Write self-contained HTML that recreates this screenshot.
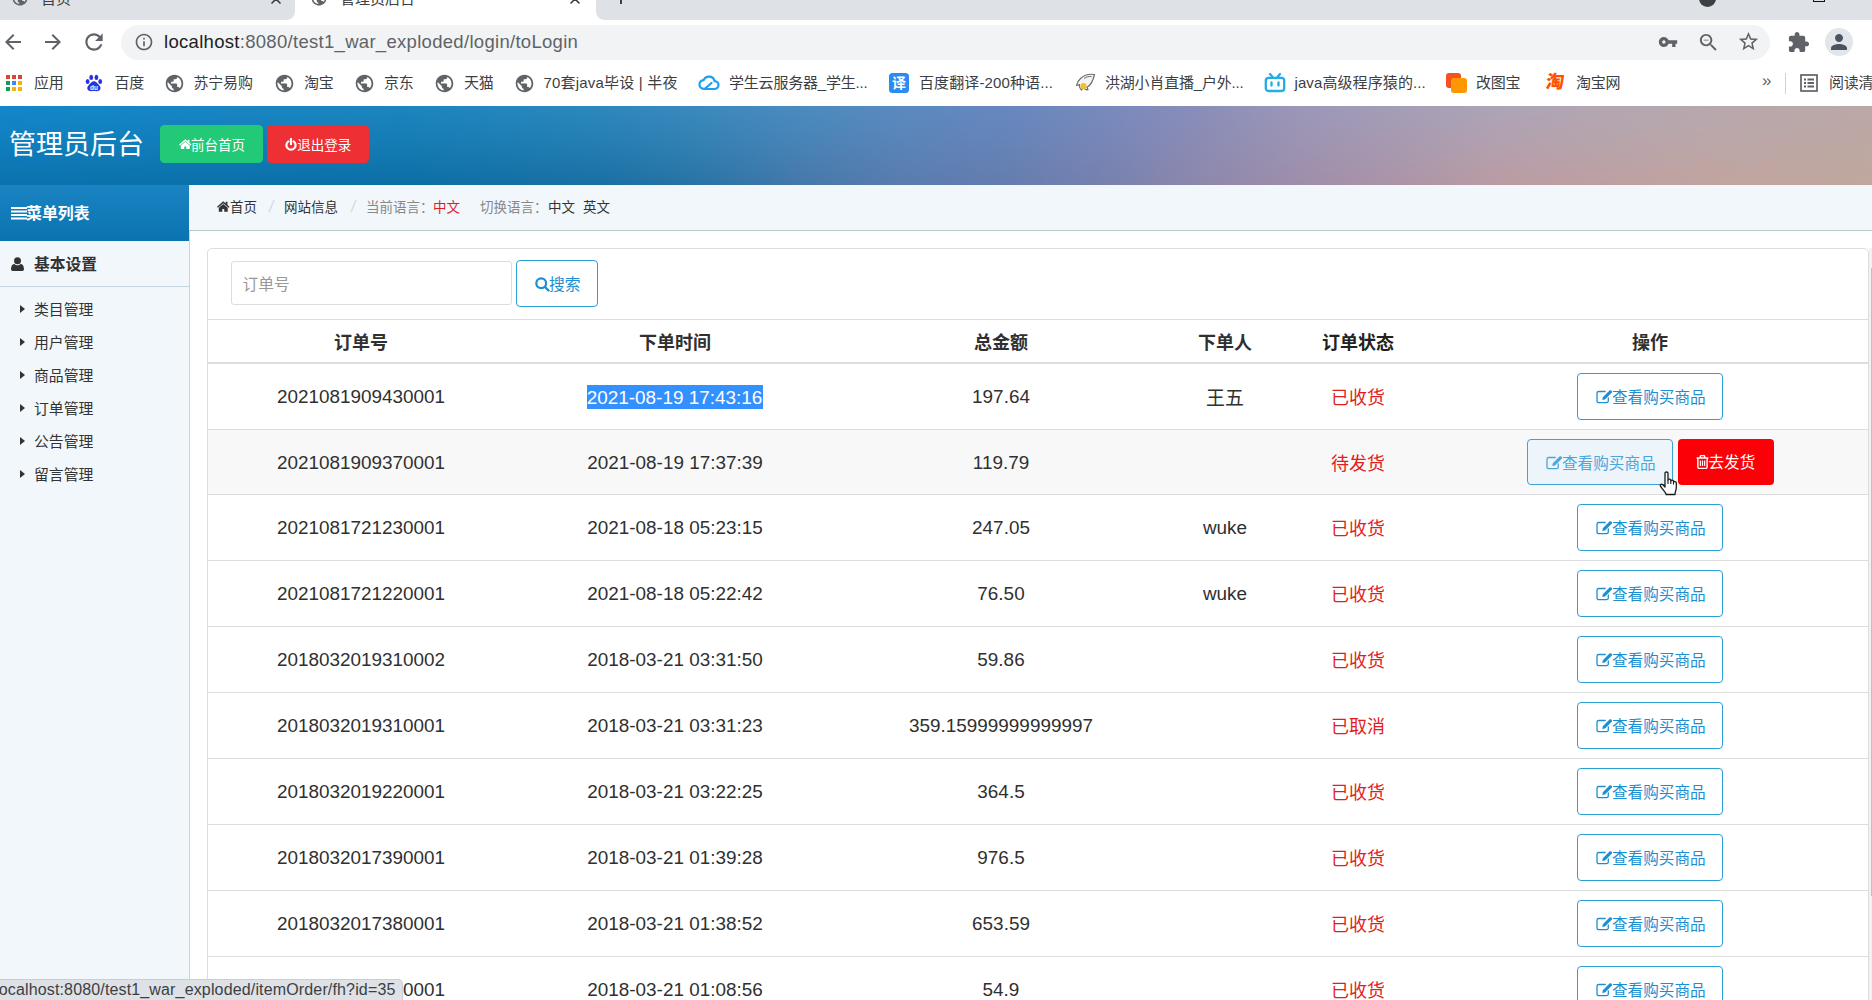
<!DOCTYPE html>
<html lang="zh-CN">
<head>
<meta charset="utf-8">
<title>管理员后台</title>
<style>
*{box-sizing:border-box;margin:0;padding:0}
html,body{width:1872px;height:1000px;overflow:hidden;background:#fff}
body{position:relative;font-family:"Liberation Sans","Noto Sans CJK SC",sans-serif;color:#222;-webkit-font-smoothing:antialiased}
.abs{position:absolute}
svg{display:block}
/* ---------- browser chrome ---------- */
#tabstrip{left:0;top:0;width:1872px;height:20px;background:#dee1e6}
#tab-active{left:295px;top:-12px;width:301px;height:32px;background:#fff;border-radius:8px 8px 0 0}
#tab-active:before,#tab-active:after{content:"";position:absolute;bottom:0;width:8px;height:8px;background:radial-gradient(circle at 0 0,rgba(255,255,255,0) 7.5px,#fff 8px)}
#tab-active:before{left:-8px}
#tab-active:after{right:-8px;transform:scaleX(-1)}
.tabtxt{top:-11px;font-size:15px;line-height:20px;color:#3c4043;white-space:nowrap}
#toolbar{left:0;top:20px;width:1872px;height:44px;background:#fff}
#omni{left:121px;top:25px;width:1649px;height:35px;border-radius:18px;background:#f1f3f4}
#url{left:164px;top:30px;font-size:18.5px;line-height:24px;color:#5f6368;white-space:nowrap;letter-spacing:.3px}
#url b{font-weight:normal;color:#202124}
#bookmarks{left:0;top:64px;width:1872px;height:41px;background:#fff}
.bm{top:72px;font-size:15px;line-height:22px;color:#3c4043;white-space:nowrap;letter-spacing:-.2px}
.ico{position:absolute}
/* ---------- page ---------- */
#header{left:0;top:105.6px;width:1872px;height:79px;background:linear-gradient(to right,#0a73ae 0px,#0c6fa6 400px,#1a70a3 600px,#2a74a6 700px,#4678aa 800px,#5a7cae 900px,#657dae 1000px,#7681ae 1100px,#8e88ac 1200px,#9f8eaa 1300px,#bb9ca4 1500px,#c2a4a0 1700px,#c0a89e 1872px)}
#header:before{content:"";position:absolute;left:0;top:0;right:0;bottom:0;background:linear-gradient(to right,#1487ca 0px,#1c85be 400px,#2d88bd 600px,#4a8bbf 800px,#5a8abf 900px,#6588bf 1000px,#7789bd 1100px,#898eb9 1200px,#9b97b8 1300px,#ada4b6 1500px,#b6a8ae 1700px,#baa8a6 1872px);-webkit-mask-image:linear-gradient(to bottom,#000 0%,rgba(0,0,0,.55) 50%,transparent 100%);mask-image:linear-gradient(to bottom,#000 0%,rgba(0,0,0,.55) 50%,transparent 100%)}
#title{left:9px;top:126px;font-size:27px;line-height:38px;color:#fff;white-space:nowrap}
.hbtn{top:125px;height:38px;border-radius:4.5px;color:#fff;font-size:13.5px;line-height:38px;white-space:nowrap}
.hbtn span{position:absolute;top:2px}
#btn-home{left:160px;width:103px;background:#22c977}
#btn-home span{left:31px}
#btn-out{left:267.3px;width:101.5px;background:#ee2f33}
#btn-out span{left:30px}
#side{left:0;top:185px;width:190px;height:815px;background:#f2f7fb;border-right:1px solid #c5d5e0}
#side-head{left:0;top:184.5px;width:189px;height:56px;background:linear-gradient(to bottom,#1a84c3,#0a73b0)}
#side-head span{position:absolute;left:26px;top:17.5px;font-size:15.9px;line-height:24px;font-weight:bold;color:#fff;white-space:nowrap}
#side-sub{left:0;top:241px;width:189px;height:46px;border-bottom:1px solid #c5d5e0}
#side-sub span{position:absolute;left:34px;top:12px;font-size:15.75px;line-height:24px;font-weight:bold;color:#333;white-space:nowrap}
.mi{left:34px;font-size:14.85px;line-height:22px;color:#333;white-space:nowrap}
.mi:before{content:"";position:absolute;left:-14px;top:6.500px;border-left:5px solid #333;border-top:4.500px solid transparent;border-bottom:4.500px solid transparent}
#crumb{left:189px;top:184.5px;width:1683px;height:46.5px;background:#f2f7fb;border-bottom:1px solid #b9cacd}
.ct{top:198px;font-size:13.5px;line-height:20px;color:#333;white-space:nowrap}
.gray{color:#888}.red{color:#e01e1e}.sep{color:#d6dade;font-size:17px;margin-top:-1px;transform:skewX(-8deg)}
#panel{left:207px;top:248px;width:1662px;height:800px;border:1px solid #ddd;border-radius:5px;background:#fff}
#inp{left:231px;top:261px;width:281px;height:44px;border:1px solid #ddd;border-radius:3px;background:#fff}
#inp span{position:absolute;left:10.5px;top:12px;font-size:15.75px;line-height:22px;color:#999;white-space:nowrap}
#sbtn{left:516px;top:260px;width:82px;height:47px;border:1px solid #2c9fd6;border-radius:4px;background:#fff;color:#1d8fd1;font-size:15.75px;line-height:45px;white-space:nowrap}
#sbtn span{position:absolute;left:32px;top:.5px}
/* table */
#tbl{left:208px;top:319px;width:1660px}
.row{position:absolute;left:0;width:1660px;border-top:1px solid #ddd}
.row.alt{background:#f8f8f8}
.c{position:absolute;top:0;height:100%;text-align:center;font-size:18.9px;white-space:nowrap;letter-spacing:0;color:#303030}
.row .c{line-height:65px}
.c1{left:0;width:306px}.c2{left:306px;width:322px}.c3{left:628px;width:330px}.c4{left:958px;width:118px}.c5{left:1076px;width:148px}.c6{left:1224px;width:436px}
.c5{color:#e01e1e;font-size:18px}.row .c5,.row .cj{padding-top:1.5px}
#thead{position:absolute;left:0;top:0;width:1660px;height:45px;border-top:1px solid #ddd;border-bottom:2px solid #ddd}
#thead .c{font-weight:bold;line-height:46px;letter-spacing:0;font-size:18px}
.vb{position:absolute;top:9px;left:145px;width:146px;height:47px;border:1px solid #2c9fd6;border-radius:4px;background:#fff;color:#1d8fd1;font-size:15.6px;line-height:45px;letter-spacing:0;text-align:left}
.vb span{position:absolute;left:34px;top:1px}
.vb .ei{position:absolute;left:17.500px;top:15px}
.vb.hov{background:#edf5fa;color:#4ba6dc;border-color:#3aa4d8;height:46px}
.sb{position:absolute;top:9px;left:246px;width:96px;height:45.5px;border-radius:4px;background:#fb0007;color:#fff;font-size:15.6px;line-height:46px;letter-spacing:0;text-align:left}
.sb span{position:absolute;left:30.500px;top:.5px}
.sb .ti{position:absolute;left:17.5px;top:16px}
.sel{background:#3390ff;color:#fff;padding:1.5px 1px 2px 0}
#status{left:0;top:979px;width:403px;height:21px;background:#dee1e6;border-top:1px solid #cdcdcd;border-right:1px solid #cdcdcd;border-radius:0 5px 0 0}
#status span{position:absolute;left:-5px;top:0;font-size:16px;line-height:20px;color:#3c4043;white-space:nowrap;letter-spacing:.15px}
</style>
</head>
<body>
<!-- CHROME -->
<div class="abs" id="tabstrip"></div>
<div class="abs" id="tab-active"></div>
<div class="abs tabtxt" style="left:41px">首页</div>
<div class="abs tabtxt" style="left:340px">管理员后台</div>
<div class="abs" id="toolbar"></div>
<div class="abs" id="omni"></div>
<div class="abs" id="url"><b>localhost</b>:8080/test1_war_exploded/login/toLogin</div>
<div class="abs" id="bookmarks"></div>
<svg class="ico" style="left:1px;top:30px" width="24" height="24" viewBox="0 0 24 24"><path fill="#5f6368" d="M20 11H7.83l5.59-5.59L12 4l-8 8 8 8 1.41-1.41L7.83 13H20v-2z"/></svg>
<svg class="ico" style="left:41px;top:30px" width="24" height="24" viewBox="0 0 24 24"><path fill="#5f6368" d="M12 4l-1.41 1.41L16.17 11H4v2h12.17l-5.58 5.59L12 20l8-8z"/></svg>
<svg class="ico" style="left:81px;top:29px" width="26" height="26" viewBox="0 0 24 24"><path fill="#5f6368" d="M17.65 6.35C16.2 4.9 14.21 4 12 4c-4.42 0-7.99 3.58-7.99 8s3.57 8 7.99 8c3.73 0 6.84-2.55 7.73-6h-2.08c-.82 2.33-3.04 4-5.65 4-3.31 0-6-2.69-6-6s2.69-6 6-6c1.66 0 3.14.69 4.22 1.78L13 11h7V4l-2.35 2.35z"/></svg>
<svg class="ico" style="left:134px;top:32px" width="20" height="20" viewBox="0 0 24 24"><path fill="#5f6368" d="M11 7h2v2h-2zm0 4h2v6h-2zm1-9C6.48 2 2 6.480 2 12s4.480 10 10 10 10-4.480 10-10S17.520 2 12 2zm0 18c-4.410 0-8-3.590-8-8s3.590-8 8-8 8 3.590 8 8-3.590 8-8 8z"/></svg>
<svg class="ico" style="left:1658px;top:32px" width="20" height="20" viewBox="0 0 24 24"><path fill="#5f6368" d="M12.65 10C11.830 7.670 9.610 6 7 6c-3.310 0-6 2.690-6 6s2.690 6 6 6c2.610 0 4.830-1.670 5.650-4H17v4h4v-4h2v-4H12.650zM7 14c-1.100 0-2-.9-2-2s.9-2 2-2 2 .9 2 2-.9 2-2 2z"/></svg>
<svg class="ico" style="left:1697px;top:31px" width="23" height="23" viewBox="0 0 24 24"><path fill="#5f6368" d="M15.500 14h-.79l-.28-.27C15.410 12.590 16 11.110 16 9.500 16 5.910 13.090 3 9.500 3S3 5.910 3 9.500 5.910 16 9.500 16c1.610 0 3.090-.59 4.230-1.570l.27.28v.79l5 4.990L20.490 19l-4.990-5zm-6 0C7.010 14 5 11.990 5 9.500S7.010 5 9.500 5 14 7.010 14 9.500 11.990 14 9.500 14zM7 9h5v1H7z"/></svg>
<svg class="ico" style="left:1737px;top:30px" width="23" height="23" viewBox="0 0 24 24"><path fill="#5f6368" d="M22 9.240l-7.190-.62L12 2 9.190 8.630 2 9.240l5.460 4.730L5.820 21 12 17.270 18.180 21l-1.630-7.030L22 9.240zM12 15.400l-3.760 2.270 1-4.280-3.320-2.880 4.380-.38L12 6.100l1.710 4.040 4.380.38-3.320 2.880 1 4.280L12 15.400z"/></svg>
<svg class="ico" style="left:1787px;top:31px" width="23" height="23" viewBox="0 0 24 24"><path fill="#5f6368" d="M20.500 11H19V7c0-1.100-.9-2-2-2h-4V3.500C13 2.120 11.880 1 10.500 1S8 2.120 8 3.500V5H4c-1.100 0-1.990.9-1.990 2v3.800H3.500c1.490 0 2.700 1.210 2.700 2.700s-1.210 2.700-2.700 2.700H2V20c0 1.100.9 2 2 2h3.800v-1.500c0-1.490 1.210-2.700 2.700-2.700 1.490 0 2.700 1.210 2.700 2.700V22H17c1.100 0 2-.9 2-2v-4h1.500c1.380 0 2.500-1.120 2.500-2.500S21.880 11 20.500 11z"/></svg>
<div class="abs" style="left:1825px;top:28px;width:28px;height:28px;border-radius:50%;background:#e2e5ea"></div>
<svg class="ico" style="left:1827px;top:30px" width="24" height="24" viewBox="0 0 24 24"><path fill="#4a5361" d="M12 12c2.210 0 4-1.790 4-4s-1.790-4-4-4-4 1.790-4 4 1.790 4 4 4zm0 2c-2.670 0-8 1.340-8 4v2h16v-2c0-2.660-5.330-4-8-4z"/></svg>
<!-- tabstrip bits -->
<svg class="ico" style="left:11px;top:-11px" width="18" height="18" viewBox="0 0 24 24"><path fill="#5f6368" d="M12 2C6.480 2 2 6.480 2 12s4.480 10 10 10 10-4.480 10-10S17.520 2 12 2zm-1 17.930c-3.950-.49-7-3.850-7-7.930 0-.62.080-1.210.21-1.790L9 15v1c0 1.100.9 2 2 2v1.930zm6.900-2.540c-.26-.81-1-1.390-1.900-1.390h-1v-3c0-.55-.45-1-1-1H8v-2h2c.55 0 1-.45 1-1V7h2c1.100 0 2-.9 2-2v-.41c2.930 1.190 5 4.060 5 7.410 0 2.080-.8 3.970-2.100 5.390z"/></svg>
<svg class="ico" style="left:310px;top:-11px" width="18" height="18" viewBox="0 0 24 24"><path fill="#5f6368" d="M12 2C6.480 2 2 6.480 2 12s4.480 10 10 10 10-4.480 10-10S17.520 2 12 2zm-1 17.930c-3.950-.49-7-3.850-7-7.930 0-.62.080-1.210.21-1.790L9 15v1c0 1.100.9 2 2 2v1.930zm6.900-2.540c-.26-.81-1-1.390-1.900-1.390h-1v-3c0-.55-.45-1-1-1H8v-2h2c.55 0 1-.45 1-1V7h2c1.100 0 2-.9 2-2v-.41c2.930 1.190 5 4.060 5 7.410 0 2.080-.8 3.970-2.100 5.390z"/></svg>
<svg class="ico" style="left:270px;top:-7px" width="12" height="12" viewBox="0 0 12 12"><path stroke="#3c4043" stroke-width="1.6" fill="none" d="M1.500 1.500l9 9M10.500 1.500l-9 9"/></svg>
<svg class="ico" style="left:569px;top:-7px" width="12" height="12" viewBox="0 0 12 12"><path stroke="#3c4043" stroke-width="1.6" fill="none" d="M1.500 1.500l9 9M10.500 1.500l-9 9"/></svg>
<div class="abs" style="left:620px;top:-6px;width:2px;height:10px;background:#3c4043"></div>
<div class="abs" style="left:1699px;top:-10px;width:17px;height:17px;border-radius:50%;background:#3c4043"></div>
<div class="abs" style="left:1813px;top:-9px;width:12px;height:11px;border:1.500px solid #111"></div>

<!--BM-START-->
<svg class="ico" style="left:6px;top:74.5px" width="16" height="16" viewBox="0 0 16 16"><rect x="0" y="0" width="4" height="4" fill="#db4437"/><rect x="6" y="0" width="4" height="4" fill="#db4437"/><rect x="12" y="0" width="4" height="4" fill="#db4437"/><rect x="0" y="6" width="4" height="4" fill="#0f9d58"/><rect x="6" y="6" width="4" height="4" fill="#4285f4"/><rect x="12" y="6" width="4" height="4" fill="#f4b400"/><rect x="0" y="12" width="4" height="4" fill="#0f9d58"/><rect x="6" y="12" width="4" height="4" fill="#f4b400"/><rect x="12" y="12" width="4" height="4" fill="#f4b400"/></svg>
<div class="abs bm" style="left:34px;">应用</div>
<svg class="ico" style="left:85px;top:74px" width="18" height="18" viewBox="0 0 18 18"><g fill="#2932e1"><ellipse cx="2.600" cy="7.600" rx="1.900" ry="2.500"/><ellipse cx="6.200" cy="3.400" rx="1.900" ry="2.600"/><ellipse cx="11.400" cy="3.400" rx="1.900" ry="2.600"/><ellipse cx="15.200" cy="7.600" rx="1.900" ry="2.500"/><path d="M8.900 7.200c2.200 0 3.300 2 4.800 3.600 1.600 1.700 2.300 3 1.500 4.800-.9 1.900-3 1.700-6.300 1.500-3.300.2-5.400.4-6.300-1.500-.8-1.800-.1-3.100 1.500-4.800C5.600 9.200 6.700 7.200 8.900 7.200z"/></g><text x="8.900" y="15.600" font-size="6.500" font-weight="bold" text-anchor="middle" fill="#fff" font-family="Liberation Sans,sans-serif">du</text></svg>
<div class="abs bm" style="left:114.5px;">百度</div>
<svg class="ico" style="left:163.5px;top:72.5px" width="21" height="21" viewBox="0 0 24 24"><path fill="#5f6368" d="M12 2C6.480 2 2 6.480 2 12s4.480 10 10 10 10-4.480 10-10S17.520 2 12 2zm-1 17.930c-3.950-.49-7-3.850-7-7.930 0-.62.080-1.210.21-1.790L9 15v1c0 1.100.9 2 2 2v1.930zm6.900-2.540c-.26-.81-1-1.390-1.900-1.390h-1v-3c0-.55-.45-1-1-1H8v-2h2c.55 0 1-.45 1-1V7h2c1.100 0 2-.9 2-2v-.41c2.930 1.190 5 4.060 5 7.410 0 2.080-.8 3.970-2.100 5.390z"/></svg>
<div class="abs bm" style="left:193.5px;">苏宁易购</div>
<svg class="ico" style="left:273.5px;top:72.5px" width="21" height="21" viewBox="0 0 24 24"><path fill="#5f6368" d="M12 2C6.480 2 2 6.480 2 12s4.480 10 10 10 10-4.480 10-10S17.520 2 12 2zm-1 17.930c-3.950-.49-7-3.850-7-7.930 0-.62.080-1.210.21-1.790L9 15v1c0 1.100.9 2 2 2v1.930zm6.900-2.540c-.26-.81-1-1.390-1.900-1.390h-1v-3c0-.55-.45-1-1-1H8v-2h2c.55 0 1-.45 1-1V7h2c1.100 0 2-.9 2-2v-.41c2.930 1.190 5 4.060 5 7.410 0 2.080-.8 3.970-2.100 5.390z"/></svg>
<div class="abs bm" style="left:304px;">淘宝</div>
<svg class="ico" style="left:353.5px;top:72.5px" width="21" height="21" viewBox="0 0 24 24"><path fill="#5f6368" d="M12 2C6.480 2 2 6.480 2 12s4.480 10 10 10 10-4.480 10-10S17.520 2 12 2zm-1 17.930c-3.950-.49-7-3.850-7-7.930 0-.62.080-1.210.21-1.790L9 15v1c0 1.100.9 2 2 2v1.930zm6.900-2.540c-.26-.81-1-1.390-1.900-1.390h-1v-3c0-.55-.45-1-1-1H8v-2h2c.55 0 1-.45 1-1V7h2c1.100 0 2-.9 2-2v-.41c2.930 1.190 5 4.060 5 7.410 0 2.080-.8 3.970-2.100 5.390z"/></svg>
<div class="abs bm" style="left:384px;">京东</div>
<svg class="ico" style="left:433.5px;top:72.5px" width="21" height="21" viewBox="0 0 24 24"><path fill="#5f6368" d="M12 2C6.480 2 2 6.480 2 12s4.480 10 10 10 10-4.480 10-10S17.520 2 12 2zm-1 17.930c-3.950-.49-7-3.850-7-7.930 0-.62.080-1.210.21-1.790L9 15v1c0 1.100.9 2 2 2v1.930zm6.900-2.540c-.26-.81-1-1.390-1.900-1.390h-1v-3c0-.55-.45-1-1-1H8v-2h2c.55 0 1-.45 1-1V7h2c1.100 0 2-.9 2-2v-.41c2.930 1.190 5 4.060 5 7.410 0 2.080-.8 3.970-2.100 5.390z"/></svg>
<div class="abs bm" style="left:464px;">天猫</div>
<svg class="ico" style="left:513.5px;top:72.5px" width="21" height="21" viewBox="0 0 24 24"><path fill="#5f6368" d="M12 2C6.480 2 2 6.480 2 12s4.480 10 10 10 10-4.480 10-10S17.520 2 12 2zm-1 17.930c-3.950-.49-7-3.850-7-7.930 0-.62.080-1.210.21-1.790L9 15v1c0 1.100.9 2 2 2v1.930zm6.900-2.540c-.26-.81-1-1.390-1.900-1.390h-1v-3c0-.55-.45-1-1-1H8v-2h2c.55 0 1-.45 1-1V7h2c1.100 0 2-.9 2-2v-.41c2.930 1.190 5 4.060 5 7.410 0 2.080-.8 3.970-2.100 5.390z"/></svg>
<div class="abs bm" style="left:543.5px;letter-spacing:.2px">70套java毕设 | 半夜</div>
<svg class="ico" style="left:698px;top:73px" width="22" height="20" viewBox="0 0 22 20"><path fill="none" stroke="#1ea0f0" stroke-width="2.200" stroke-linecap="round" stroke-linejoin="round" d="M6.500 16h9.800c2.300 0 4.200-1.700 4.200-3.900 0-2.100-1.700-3.800-3.900-3.900C16 5.500 13.700 3.600 11 3.600c-2.400 0-4.400 1.400-5.300 3.500C3.300 7.400 1.500 9.300 1.500 11.600c0 2.400 2 4.400 5 4.400zM6.500 16l7-6"/></svg>
<div class="abs bm" style="left:729px;">学生云服务器_学生...</div>
<div class="abs" style="left:889px;top:73px;width:20px;height:20px;border-radius:3.500px;background:#2a8cf0;color:#fff;font-size:14px;line-height:20px;text-align:center;font-weight:bold">译</div>
<div class="abs bm" style="left:919px;letter-spacing:.12px">百度翻译-200种语...</div>
<svg class="ico" style="left:1075px;top:73px" width="21" height="20" viewBox="0 0 21 20"><path fill="#f3f3f3" stroke="#6b6b6b" stroke-width="1.200" stroke-linejoin="round" d="M19.500 1.500C15 .8 9.500 1.800 5.500 5.500 3.500 7.300 2 9.800 1.500 12.500l3-.8c-.3 1.800.3 3.800 2 5.500l1.500-2.500c1.500 1.500 3.500 2.300 5 2l-1-2.500c3-1.500 6-6 7.500-12.700z"/><circle cx="8.500" cy="13" r="3" fill="#f5c018"/><path d="M9 5.500c2-1.500 5-2.300 7.500-2" fill="none" stroke="#6b6b6b" stroke-width="1"/></svg>
<div class="abs bm" style="left:1105px;">洪湖小肖直播_户外...</div>
<svg class="ico" style="left:1264px;top:72px" width="22" height="22" viewBox="0 0 22 22"><path fill="none" stroke="#20aee5" stroke-width="2.300" stroke-linecap="round" stroke-linejoin="round" d="M6 2l3 3.500M16 2l-3 3.500M4.500 5.800h13c1.500 0 2.700 1.200 2.700 2.700v7.800c0 1.500-1.200 2.700-2.700 2.700h-13c-1.500 0-2.700-1.200-2.700-2.700V8.500c0-1.500 1.200-2.700 2.700-2.700zM7.500 10.500v3M14.500 10.500v3"/></svg>
<div class="abs bm" style="left:1294.5px;letter-spacing:.1px">java高级程序猿的...</div>
<div class="abs" style="left:1446px;top:73px;width:15px;height:15px;border-radius:3px;background:#f4511e"></div><div class="abs" style="left:1451px;top:78px;width:16px;height:15px;border-radius:3px;background:#ff9800"></div>
<div class="abs bm" style="left:1476px;">改图宝</div>
<div class="abs" style="left:1546px;top:71px;width:20px;height:22px;color:#ff5000;font-size:18px;line-height:22px;font-weight:900;transform:skewX(-8deg);letter-spacing:-1px">淘</div>
<div class="abs bm" style="left:1576px;">淘宝网</div>
<div class="abs bm" style="left:1762px;font-size:17px;top:70px;color:#5f6368">»</div>
<div class="abs" style="left:1785px;top:73px;width:1px;height:21px;background:#d0d3d7"></div>
<svg class="ico" style="left:1800px;top:74px" width="18" height="18" viewBox="0 0 18 18"><rect x="1" y="1" width="16" height="16" fill="none" stroke="#5f6368" stroke-width="1.700"/><path fill="#5f6368" d="M4 4.500h2v2H4zM4 8h2v2H4zM4 11.500h2v2H4zM7.500 4.500H14v2H7.500zM7.500 8H14v2H7.500zM7.500 11.500H14v2H7.500z"/></svg>
<div class="abs bm" style="left:1829px;">阅读清单</div>
<!--BM-END-->
<!-- PAGE -->
<div class="abs" id="header"></div>
<div class="abs" id="title">管理员后台</div>
<div class="abs hbtn" id="btn-home"><span>前台首页</span></div>
<div class="abs hbtn" id="btn-out"><span>退出登录</span></div>
<div class="abs" id="side"></div>
<div class="abs" id="side-head"><span>菜单列表</span></div>
<div class="abs" id="side-sub"><span>基本设置</span></div>
<div class="abs mi" style="top:298.5px">类目管理</div>
<div class="abs mi" style="top:331.5px">用户管理</div>
<div class="abs mi" style="top:364.5px">商品管理</div>
<div class="abs mi" style="top:397.5px">订单管理</div>
<div class="abs mi" style="top:430.5px">公告管理</div>
<div class="abs mi" style="top:463.5px">留言管理</div>
<div class="abs" id="crumb"></div>
<div class="abs ct" style="left:230px">首页</div>
<div class="abs ct sep" style="left:268.5px">/</div>
<div class="abs ct" style="left:284px">网站信息</div>
<div class="abs ct sep" style="left:351px">/</div>
<div class="abs ct gray" style="left:366px">当前语言：</div>
<div class="abs ct red" style="left:433px">中文</div>
<div class="abs ct gray" style="left:480px">切换语言：</div>
<div class="abs ct" style="left:548px">中文</div>
<div class="abs ct" style="left:583px">英文</div>
<svg class="ico" style="left:179px;top:138.5px" width="12.5" height="10.5" viewBox="0 0 14 12" preserveAspectRatio="none" fill="#fff"><path d="M7 .3L0 6.200l1 1.200L7 2.400l6 5 1-1.200-2.300-1.900V.9H9.700v1.700zM7 3.200L2 7.400v4.400h3.900V8.700h2.200v3.100H12V7.400z"/></svg><svg class="ico" style="left:284.5px;top:137.5px" width="12" height="13" viewBox="0 0 12 13"><path d="M3.400 3.300A4.600 4.600 0 1 0 8.600 3.300" fill="none" stroke="#fff" stroke-width="2.200" stroke-linecap="round"/><path d="M6 1v5.200" stroke="#fff" stroke-width="2.200" stroke-linecap="round"/></svg><svg class="ico" style="left:10.5px;top:206.5px" width="16.5" height="13" viewBox="0 0 16.5 13" fill="#fff"><rect x="0" y="0" width="16.500" height="2"/><rect x="0" y="3.500" width="16.500" height="2"/><rect x="0" y="7" width="16.500" height="2"/><rect x="0" y="10.500" width="16.500" height="2"/></svg><svg class="ico" style="left:10.5px;top:257px" width="13" height="14" viewBox="0 0 13 14" fill="#333"><circle cx="6.500" cy="3.700" r="3.500"/><path d="M0 12.300C0 8.600 1.600 7 3.400 6.900c.8.800 1.900 1.300 3.100 1.300s2.300-.5 3.100-1.300C11.400 7 13 8.600 13 12.300c0 1-.8 1.700-1.800 1.700H1.800C.8 14 0 13.300 0 12.300z"/></svg><svg class="ico" style="left:217px;top:201px" width="12.5" height="11" viewBox="0 0 14 12" preserveAspectRatio="none" fill="#333"><path d="M7 .3L0 6.200l1 1.200L7 2.400l6 5 1-1.200-2.300-1.900V.9H9.700v1.700zM7 3.200L2 7.400v4.400h3.900V8.700h2.200v3.100H12V7.400z"/></svg>
<div class="abs" id="panel"></div>
<div class="abs" style="left:1869px;top:248px;width:3px;height:752px;background:#f1f1f1"></div><div class="abs" style="left:1870.5px;top:268px;width:1.5px;height:628px;background:#c1c1c1"></div>
<div class="abs" id="inp"><span>订单号</span></div>
<div class="abs" id="sbtn"><svg class="ico" style="left:17.5px;top:16px" width="15" height="15" viewBox="0 0 15 15"><circle cx="6.200" cy="6.200" r="4.900" fill="none" stroke="#1d8fd1" stroke-width="2.200"/><path d="M10 10l3.500 3.500" stroke="#1d8fd1" stroke-width="2.400" stroke-linecap="round"/></svg><span>搜索</span></div>
<div class="abs" id="tbl">
<div id="thead"><div class="c c1">订单号</div><div class="c c2">下单时间</div><div class="c c3">总金额</div><div class="c c4">下单人</div><div class="c c5" style="color:#222">订单状态</div><div class="c c6">操作</div></div>
<div class="row" style="top:44px;height:66px"><div class="c c1">2021081909430001</div><div class="c c2"><span class="sel">2021-08-19 17:43:16</span></div><div class="c c3">197.64</div><div class="c c4 cj">王五</div><div class="c c5">已收货</div><div class="c c6"><div class="vb"><svg class="ei" width="17" height="15" viewBox="0 0 17 15"><path d="M12.300 8.800v3.100c0 1-.8 1.800-1.800 1.800H2.800c-1 0-1.800-.8-1.800-1.800V4.300c0-1 .8-1.800 1.800-1.800h6.400" fill="none" stroke="currentColor" stroke-width="1.300" stroke-linecap="round"/><path d="M6.300 10.900l.5-2.700 6.700-6.700c.5-.5 1.300-.5 1.800 0l.4.400c.5.500.5 1.300 0 1.800L9 10.400z" fill="currentColor"/></svg><span>查看购买商品</span></div></div></div>
<div class="row alt" style="top:110px;height:65px"><div class="c c1">2021081909370001</div><div class="c c2">2021-08-19 17:37:39</div><div class="c c3">119.79</div><div class="c c4"></div><div class="c c5">待发货</div><div class="c c6"><div class="vb hov" style="left:95px"><svg class="ei" width="17" height="15" viewBox="0 0 17 15"><path d="M12.300 8.800v3.100c0 1-.8 1.800-1.800 1.800H2.800c-1 0-1.800-.8-1.800-1.800V4.300c0-1 .8-1.800 1.800-1.800h6.400" fill="none" stroke="currentColor" stroke-width="1.300" stroke-linecap="round"/><path d="M6.300 10.900l.5-2.700 6.700-6.700c.5-.5 1.300-.5 1.800 0l.4.400c.5.500.5 1.300 0 1.800L9 10.400z" fill="currentColor"/></svg><span>查看购买商品</span></div><div class="sb"><svg class="ti" width="13" height="14" viewBox="0 0 12 13"><path d="M.5 2.800h11M4 2.600V1.300c0-.4.300-.7.700-.7h2.600c.4 0 .7.300.7.700v1.300M1.700 2.800v8.400c0 .7.500 1.200 1.200 1.200h6.200c.7 0 1.200-.5 1.200-1.200V2.800" fill="none" stroke="#fff" stroke-width="1.300"/><path d="M4 5v5.300M6 5v5.300M8 5v5.300" stroke="#fff" stroke-width="1.100"/></svg><span>去发货</span></div></div></div>
<div class="row" style="top:175px;height:66px"><div class="c c1">2021081721230001</div><div class="c c2">2021-08-18 05:23:15</div><div class="c c3">247.05</div><div class="c c4">wuke</div><div class="c c5">已收货</div><div class="c c6"><div class="vb"><svg class="ei" width="17" height="15" viewBox="0 0 17 15"><path d="M12.300 8.800v3.100c0 1-.8 1.800-1.800 1.800H2.800c-1 0-1.800-.8-1.800-1.800V4.300c0-1 .8-1.800 1.800-1.800h6.400" fill="none" stroke="currentColor" stroke-width="1.300" stroke-linecap="round"/><path d="M6.300 10.900l.5-2.700 6.700-6.700c.5-.5 1.300-.5 1.800 0l.4.400c.5.500.5 1.300 0 1.800L9 10.400z" fill="currentColor"/></svg><span>查看购买商品</span></div></div></div>
<div class="row" style="top:241px;height:66px"><div class="c c1">2021081721220001</div><div class="c c2">2021-08-18 05:22:42</div><div class="c c3">76.50</div><div class="c c4">wuke</div><div class="c c5">已收货</div><div class="c c6"><div class="vb"><svg class="ei" width="17" height="15" viewBox="0 0 17 15"><path d="M12.300 8.800v3.100c0 1-.8 1.800-1.800 1.800H2.800c-1 0-1.800-.8-1.800-1.800V4.300c0-1 .8-1.800 1.800-1.800h6.400" fill="none" stroke="currentColor" stroke-width="1.300" stroke-linecap="round"/><path d="M6.300 10.900l.5-2.700 6.700-6.700c.5-.5 1.300-.5 1.800 0l.4.400c.5.500.5 1.300 0 1.800L9 10.400z" fill="currentColor"/></svg><span>查看购买商品</span></div></div></div>
<div class="row" style="top:307px;height:66px"><div class="c c1">2018032019310002</div><div class="c c2">2018-03-21 03:31:50</div><div class="c c3">59.86</div><div class="c c4"></div><div class="c c5">已收货</div><div class="c c6"><div class="vb"><svg class="ei" width="17" height="15" viewBox="0 0 17 15"><path d="M12.300 8.800v3.100c0 1-.8 1.800-1.800 1.800H2.800c-1 0-1.800-.8-1.800-1.800V4.300c0-1 .8-1.800 1.800-1.800h6.400" fill="none" stroke="currentColor" stroke-width="1.300" stroke-linecap="round"/><path d="M6.300 10.900l.5-2.700 6.700-6.700c.5-.5 1.300-.5 1.800 0l.4.400c.5.500.5 1.300 0 1.800L9 10.400z" fill="currentColor"/></svg><span>查看购买商品</span></div></div></div>
<div class="row" style="top:373px;height:66px"><div class="c c1">2018032019310001</div><div class="c c2">2018-03-21 03:31:23</div><div class="c c3">359.15999999999997</div><div class="c c4"></div><div class="c c5">已取消</div><div class="c c6"><div class="vb"><svg class="ei" width="17" height="15" viewBox="0 0 17 15"><path d="M12.300 8.800v3.100c0 1-.8 1.800-1.800 1.800H2.800c-1 0-1.800-.8-1.800-1.800V4.300c0-1 .8-1.800 1.800-1.800h6.400" fill="none" stroke="currentColor" stroke-width="1.300" stroke-linecap="round"/><path d="M6.300 10.900l.5-2.700 6.700-6.700c.5-.5 1.300-.5 1.800 0l.4.400c.5.500.5 1.300 0 1.800L9 10.400z" fill="currentColor"/></svg><span>查看购买商品</span></div></div></div>
<div class="row" style="top:439px;height:66px"><div class="c c1">2018032019220001</div><div class="c c2">2018-03-21 03:22:25</div><div class="c c3">364.5</div><div class="c c4"></div><div class="c c5">已收货</div><div class="c c6"><div class="vb"><svg class="ei" width="17" height="15" viewBox="0 0 17 15"><path d="M12.300 8.800v3.100c0 1-.8 1.800-1.800 1.800H2.800c-1 0-1.800-.8-1.800-1.800V4.300c0-1 .8-1.800 1.800-1.800h6.400" fill="none" stroke="currentColor" stroke-width="1.300" stroke-linecap="round"/><path d="M6.300 10.900l.5-2.700 6.700-6.700c.5-.5 1.300-.5 1.800 0l.4.400c.5.500.5 1.300 0 1.800L9 10.400z" fill="currentColor"/></svg><span>查看购买商品</span></div></div></div>
<div class="row" style="top:505px;height:66px"><div class="c c1">2018032017390001</div><div class="c c2">2018-03-21 01:39:28</div><div class="c c3">976.5</div><div class="c c4"></div><div class="c c5">已收货</div><div class="c c6"><div class="vb"><svg class="ei" width="17" height="15" viewBox="0 0 17 15"><path d="M12.300 8.800v3.100c0 1-.8 1.800-1.800 1.800H2.800c-1 0-1.800-.8-1.800-1.800V4.300c0-1 .8-1.800 1.800-1.800h6.400" fill="none" stroke="currentColor" stroke-width="1.300" stroke-linecap="round"/><path d="M6.300 10.900l.5-2.700 6.700-6.700c.5-.5 1.300-.5 1.800 0l.4.400c.5.500.5 1.300 0 1.800L9 10.400z" fill="currentColor"/></svg><span>查看购买商品</span></div></div></div>
<div class="row" style="top:571px;height:66px"><div class="c c1">2018032017380001</div><div class="c c2">2018-03-21 01:38:52</div><div class="c c3">653.59</div><div class="c c4"></div><div class="c c5">已收货</div><div class="c c6"><div class="vb"><svg class="ei" width="17" height="15" viewBox="0 0 17 15"><path d="M12.300 8.800v3.100c0 1-.8 1.800-1.800 1.800H2.800c-1 0-1.800-.8-1.800-1.800V4.300c0-1 .8-1.800 1.800-1.800h6.400" fill="none" stroke="currentColor" stroke-width="1.300" stroke-linecap="round"/><path d="M6.300 10.900l.5-2.700 6.700-6.700c.5-.5 1.300-.5 1.800 0l.4.400c.5.500.5 1.300 0 1.800L9 10.400z" fill="currentColor"/></svg><span>查看购买商品</span></div></div></div>
<div class="row" style="top:637px;height:66px"><div class="c c1">2018032017080001</div><div class="c c2">2018-03-21 01:08:56</div><div class="c c3">54.9</div><div class="c c4"></div><div class="c c5">已收货</div><div class="c c6"><div class="vb"><svg class="ei" width="17" height="15" viewBox="0 0 17 15"><path d="M12.300 8.800v3.100c0 1-.8 1.800-1.800 1.800H2.800c-1 0-1.800-.8-1.800-1.800V4.300c0-1 .8-1.800 1.800-1.800h6.400" fill="none" stroke="currentColor" stroke-width="1.300" stroke-linecap="round"/><path d="M6.300 10.900l.5-2.700 6.700-6.700c.5-.5 1.300-.5 1.800 0l.4.400c.5.500.5 1.300 0 1.800L9 10.400z" fill="currentColor"/></svg><span>查看购买商品</span></div></div></div>
</div>
<svg class="ico" style="left:1658.5px;top:471px" width="19" height="25" viewBox="0 0 19 25"><path d="M6 2.200C6 .6 9 .6 9 2.200V9C9 7.700 11.800 7.700 11.800 9.200V10C11.800 8.800 14.500 8.800 14.500 10.300V11.200C14.500 10.200 17.300 10.200 17.300 11.800V16.500C17.300 19.500 16 20.500 16 23.500H7.200C6.800 21.500 3.500 18.500 1.500 15.200C.6 13.600 2.400 12.600 3.800 13.800L6 16Z" fill="#fff" stroke="#1a1a1a" stroke-width="1.300" stroke-linejoin="round"/><path d="M9 9v4M11.800 10v3M14.500 11v2.500" stroke="#1a1a1a" stroke-width="1.100" fill="none"/></svg>
<div class="abs" id="status"><span>localhost:8080/test1_war_exploded/itemOrder/fh?id=35</span></div>
</body>
</html>
